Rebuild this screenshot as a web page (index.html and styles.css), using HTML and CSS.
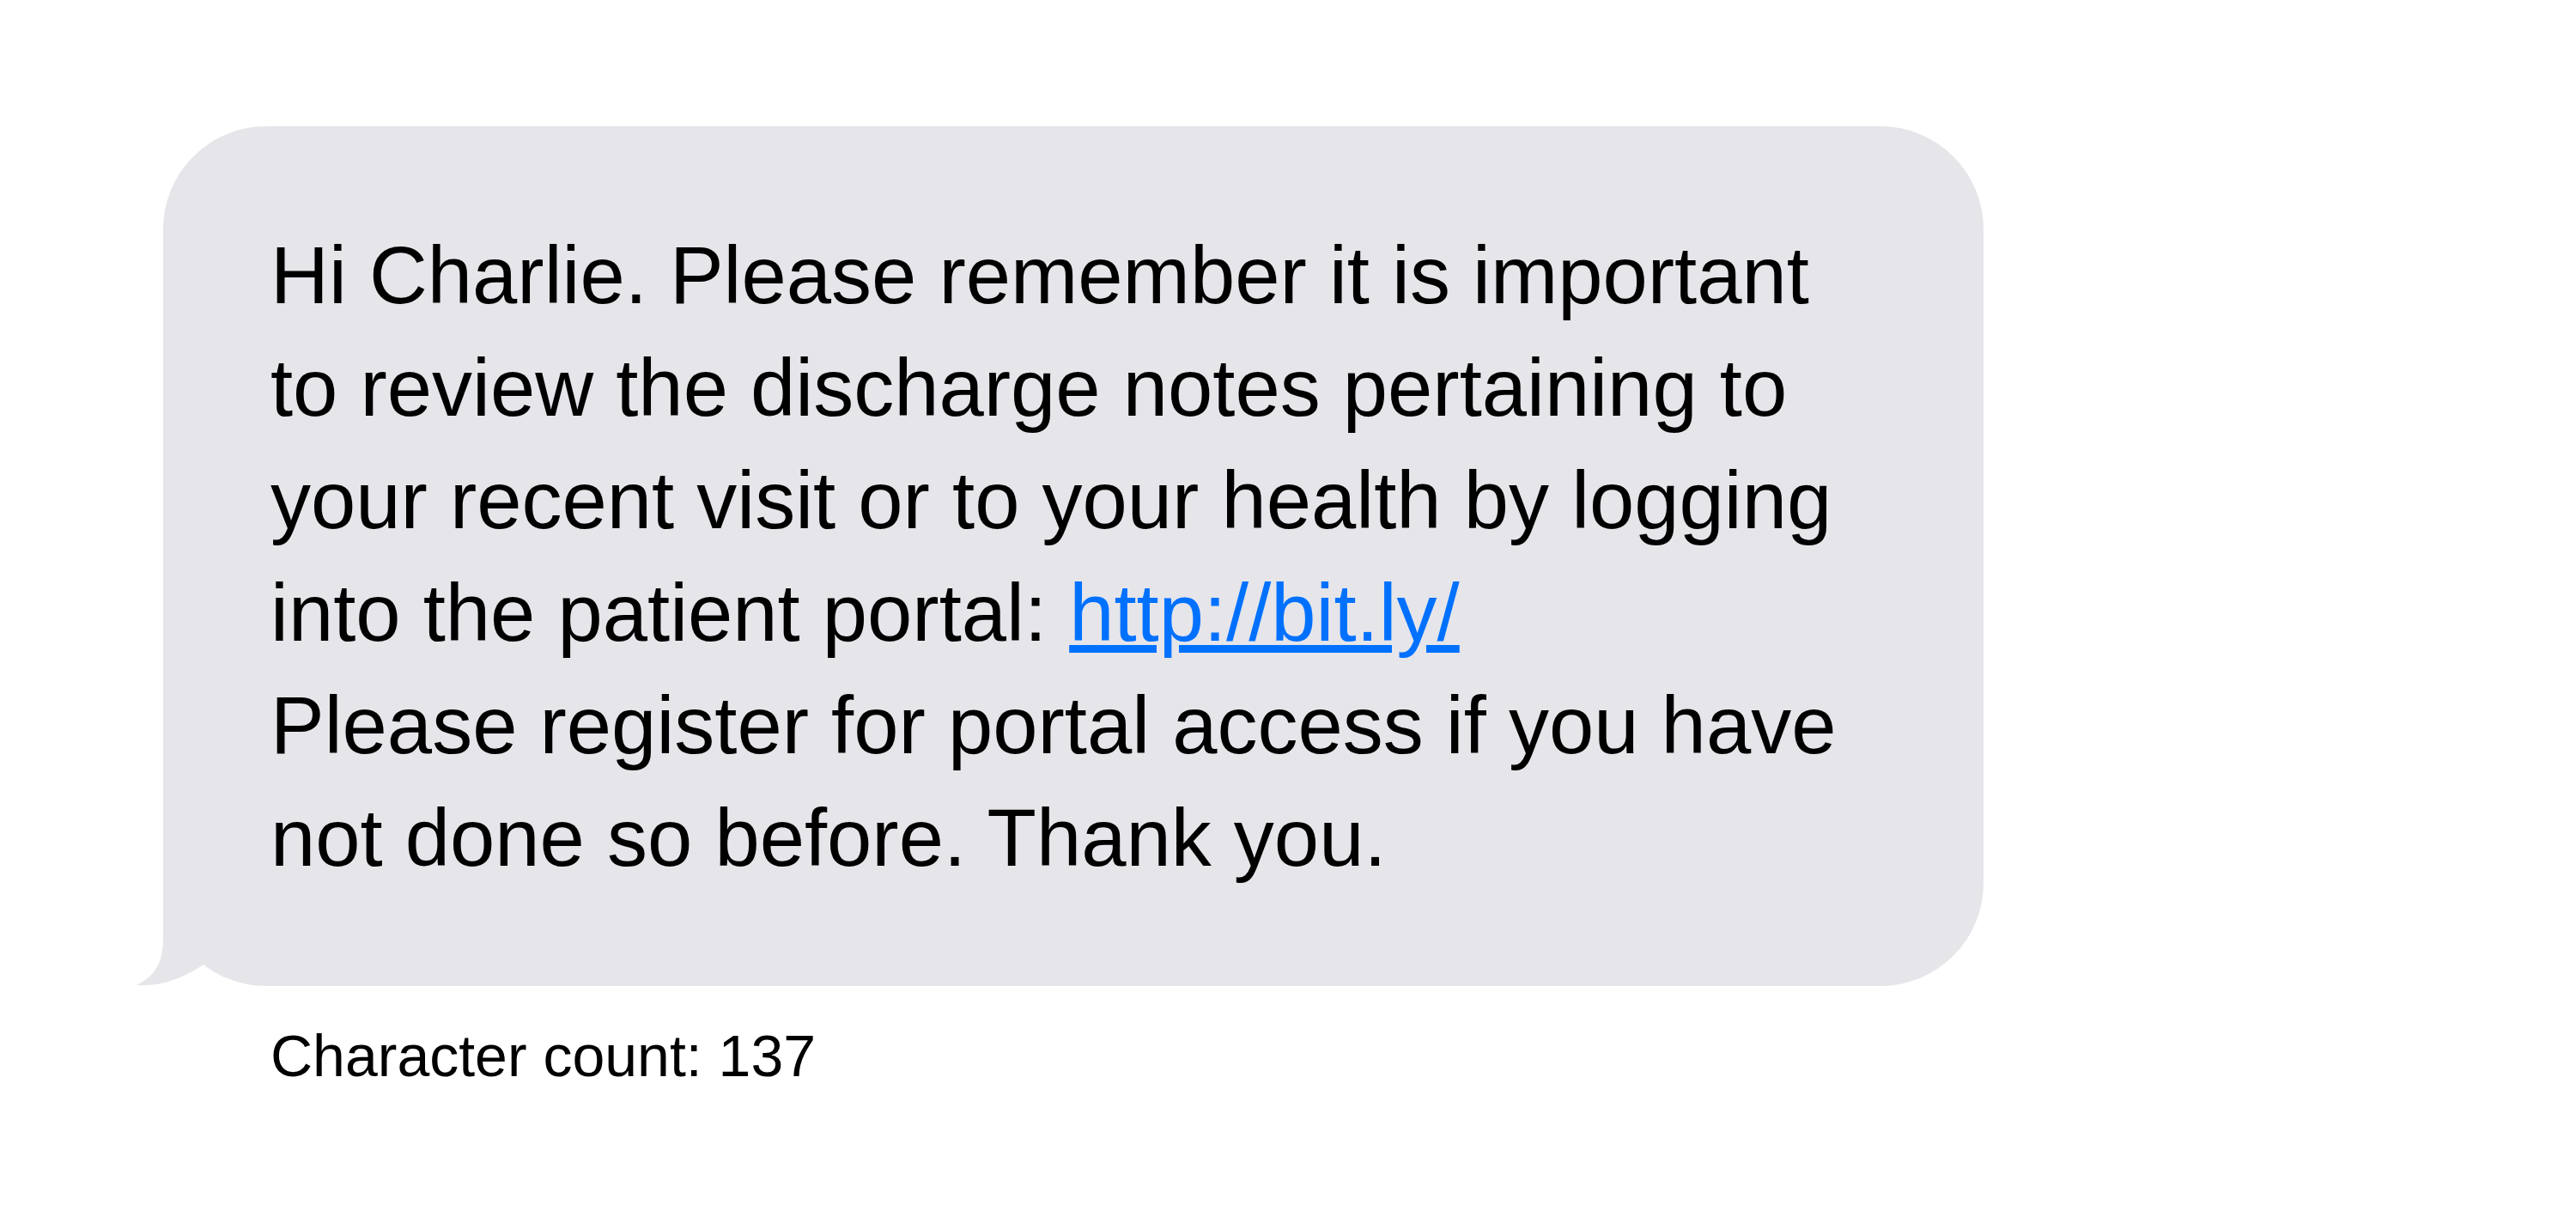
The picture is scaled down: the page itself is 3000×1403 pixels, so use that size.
FILE: index.html
```html
<!DOCTYPE html>
<html lang="en">
<head>
<meta charset="utf-8">
<title>Message preview</title>
<link rel="stylesheet" href="styles.css">
</head>
<body>
<main class="page">
  <div class="bubble">
    <svg class="tail" width="160" height="141" viewBox="0 0 160 141" aria-hidden="true">
      <path d="M35,0 L35,84 C35,112 28,128 4,140 C32,142 60,132 88,112 L88,0 Z" />
    </svg>
    <p class="message">Hi Charlie. Please remember it is important<br>to review the discharge notes pertaining to<br>your recent visit or to your health by logging<br>into the patient portal: <a class="link" href="#">http://bit.ly/</a><br>Please register for portal access if you have<br>not done so before. Thank you.</p>
  </div>
  <p class="count">Character count: 137</p>
</main>
</body>
</html>
```

FILE: styles.css
```css
html, body {
  margin: 0;
  padding: 0;
  background: #ffffff;
}

body {
  font-family: "Liberation Sans", Arial, sans-serif;
  color: #000000;
}

.page {
  padding: 147px 0 0 190px;
  display: flex;
  flex-direction: column;
  align-items: flex-start;
}

.bubble {
  position: relative;
  width: 2120px;
  box-sizing: border-box;
  padding: 108px 0 107px 125px;
  background: #e5e5ea;
  border-radius: 120px;
}

.tail {
  position: absolute;
  left: -35px;
  bottom: 0;
  display: block;
  fill: #e5e5ea;
}

.message {
  position: relative;
  margin: 0;
  font-size: 94px;
  line-height: 131px;
  white-space: nowrap;
}

.link {
  color: #0071ff;
  text-decoration: underline;
  text-decoration-thickness: 9px;
  text-underline-offset: 5px;
}

.count {
  margin: 42px 0 0 125px;
  font-size: 68px;
  line-height: 78px;
}
```
